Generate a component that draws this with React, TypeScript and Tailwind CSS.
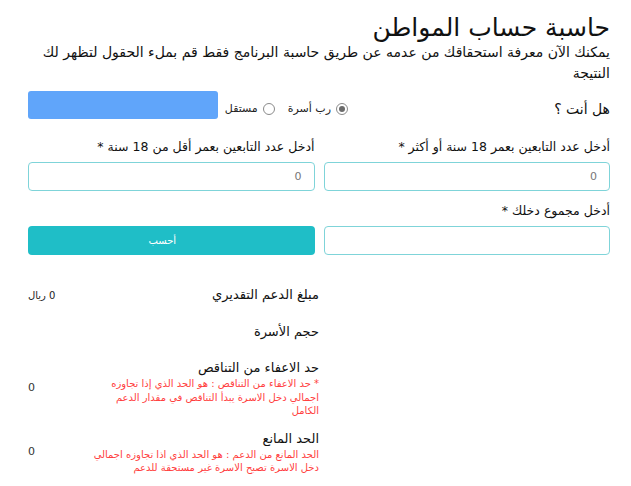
import React from "react";

function Radio({ checked, label }: { checked?: boolean; label: string }) {
  return (
    <label className="flex items-center gap-[5px] text-[11px] text-[#222]">
      <span className="flex h-[12px] w-[12px] items-center justify-center rounded-full border border-[#8a8a8a] bg-white">
        {checked && <span className="h-[6px] w-[6px] rounded-full bg-[#6b6b6b]" />}
      </span>
      <span>{label}</span>
    </label>
  );
}

function ResultRow({
  title,
  note,
  value,
  valueClass,
  className,
}: {
  title: string;
  note?: string[];
  value: string;
  valueClass?: string;
  className?: string;
}) {
  return (
    <div className={"flex items-center justify-between " + (className ?? "")}>
      <div className="shrink-0">
        <div className="text-[13px] leading-[18px] text-[#111]">{title}</div>
        {note && (
          <div className="text-[10px] leading-[13.5px] text-[#ff4040]">
            {note.map((l, i) => (
              <div key={i} className="whitespace-nowrap">
                {l}
              </div>
            ))}
          </div>
        )}
      </div>
      <div className={valueClass}>{value}</div>
    </div>
  );
}

export default function App() {
  return (
    <div
      dir="rtl"
      className="min-h-[486px] w-[631px] bg-white pt-[8px] pl-[28px] pr-[21px] text-[#111]"
      style={{ fontFamily: '"DejaVu Sans", "Noto Sans", sans-serif' }}
    >
      <h1 className="mt-[4px] text-[25px] leading-[32px] font-normal">حاسبة حساب المواطن</h1>
      <p className="mt-[-2px] text-[14px] leading-[21px]">
        يمكنك الآن معرفة استحقاقك من عدمه عن طريق حاسبة البرنامج فقط قم بملء الحقول لتظهر لك النتيجة
      </p>

      <div className="mt-[7px] flex h-[28px] items-center">
        <div className="mt-[8px] w-[262px] text-[14px]">هل أنت ؟</div>
        <div className="mt-[8px] flex items-center gap-[13px]">
          <Radio checked label="رب أسرة" />
          <Radio label="مستقل" />
        </div>
        <div className="mr-auto h-[28px] w-[190px] rounded-[3px] bg-[#60a5fa]" />
      </div>

      <div className="mt-[18px] grid grid-cols-2 gap-x-[9px]">
        <div>
          <div className="text-[12.5px] leading-[20px]">أدخل عدد التابعين بعمر 18 سنة أو أكثر *</div>
          <input
            placeholder="0"
            className="mt-[5px] h-[29px] w-full rounded-[4px] border border-[#7fd4d9] px-[12px] text-[11px] placeholder:text-[#777] outline-none"
          />
        </div>
        <div>
          <div className="text-[12.5px] leading-[20px]">أدخل عدد التابعين بعمر أقل من 18 سنة *</div>
          <input
            placeholder="0"
            className="mt-[5px] h-[29px] w-full rounded-[4px] border border-[#7fd4d9] px-[12px] text-[11px] placeholder:text-[#777] outline-none"
          />
        </div>
        <div className="mt-[10px]">
          <div className="text-[12.5px] leading-[20px]">أدخل مجموع دخلك *</div>
          <input className="mt-[5px] h-[29px] w-full rounded-[4px] border border-[#7fd4d9] px-[12px] text-[11px] outline-none" />
        </div>
        <div className="mt-[10px] flex flex-col justify-end">
          <button className="h-[29px] w-full rounded-[4px] bg-[#1fbec7] pr-[18px] text-[10px] text-white">أحسب</button>
        </div>
      </div>

      <div className="mt-[29px] flex justify-end">
        <div className="w-[291px]">
          <ResultRow
            title="مبلغ الدعم التقديري"
            value="0 ريال"
            valueClass="text-[10px] text-[#222]"
            className="h-[22px]"
          />
          <ResultRow title="حجم الأسرة" value="" className="mt-[15px] h-[22px]" />
          <ResultRow
            title="حد الاعفاء من التناقص"
            note={[
              "* حد الاعفاء من التناقص : هو الحد الذي إذا تجاوزه",
              "اجمالي دخل الاسرة يبدأ التناقص في مقدار الدعم",
              "الكامل",
            ]}
            value="0"
            valueClass="text-[11px] text-[#333]"
            className="mt-[16px]"
          />
          <ResultRow
            title="الحد المانع"
            note={[
              "الحد المانع من الدعم : هو الحد الذي اذا تجاوزه اجمالي",
              "دخل الاسرة تصبح الاسرة غير مستحقة للدعم",
            ]}
            value="0"
            valueClass="text-[11px] text-[#333]"
            className="mt-[12px]"
          />
        </div>
      </div>
    </div>
  );
}
